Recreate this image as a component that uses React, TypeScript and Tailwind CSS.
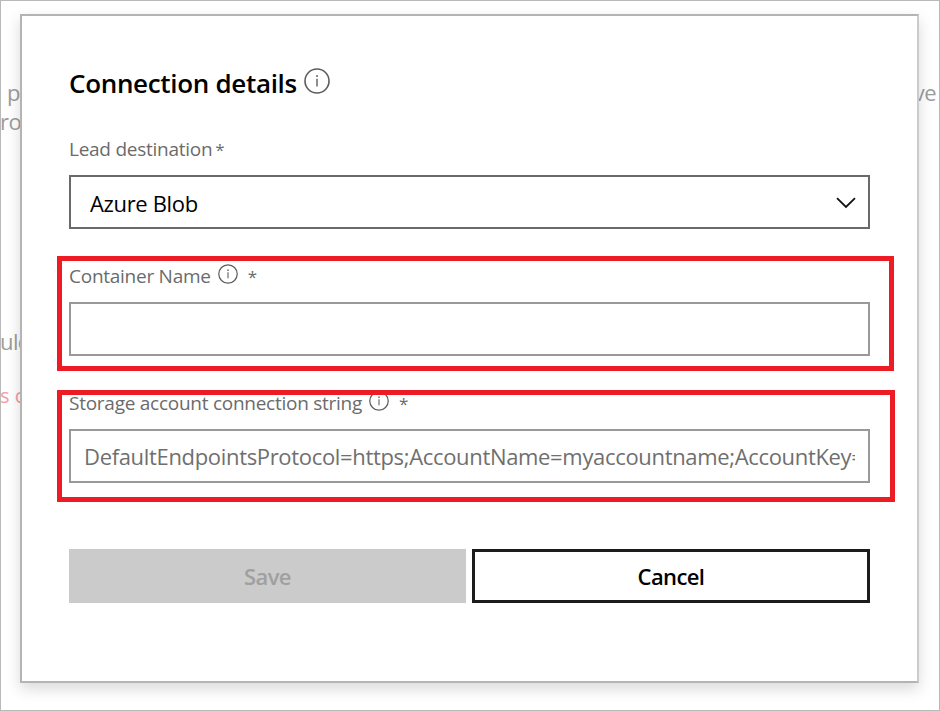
import type { ReactNode } from 'react'

function InfoIcon({ size, className = '' }: { size: number; className?: string }) {
  return (
    <svg width={size} height={size} viewBox="0 0 26 26" fill="none" className={`shrink-0 ${className}`}>
      <circle cx="13" cy="13" r="12" stroke="#5c5c5c" strokeWidth="1.6" />
      <path d="M13 10.8V18.6" stroke="#707070" strokeWidth="1.6" />
      <circle cx="13" cy="8" r="1.1" fill="#707070" />
    </svg>
  )
}

function Field({ label, info = false, children }: { label: string; info?: boolean; children: ReactNode }) {
  return (
    <section className="flex flex-col gap-[11px]">
      <div className="flex h-[30px] items-center gap-[7px] whitespace-nowrap pt-px text-[19px] tracking-[-0.26px] text-[#6b6b6b]">
        <span>
          {label}
          {!info && <span className="pl-[3px] text-[17px]">*</span>}
        </span>
        {info && <InfoIcon size={20} className="mb-[6px]" />}
        {info && <span className="pl-[3px] text-[17px]">*</span>}
      </div>
      {children}
    </section>
  )
}

function Highlight({ className }: { className: string }) {
  return <div className={`pointer-events-none absolute border-[5px] border-[#ed1c24] ${className}`} />
}

export default function App() {
  return (
    <div className="relative h-[711px] w-[940px] overflow-hidden border border-[#b9b9b9] bg-white px-[19px] pt-[13px] font-['Open_Sans','Noto_Sans',sans-serif]">
      <div className="absolute inset-0 flex justify-between pt-[76px] text-[22px] leading-[30px] tracking-[-0.6px] text-[#9c9c9c]">
        <div className="-ml-px flex flex-col whitespace-nowrap">
          <span className="pl-[7px]">p</span>
          <span className="-mt-px">ro</span>
          <span className="mt-[190px]">uld</span>
          <span className="mt-[25px] text-[20px] tracking-normal text-[#f59ba3]">s c</span>
        </div>
        <span className="pr-[3px]">ve</span>
      </div>
      <main className="relative flex h-[669px] w-[899px] flex-col border-2 border-[#b4b4b4] border-r-[#cbcbcb] bg-white px-[47px] pt-[49px] shadow-[0_6px_14px_rgba(0,0,0,0.15)]">
        <header className="flex h-[40px] items-center gap-[7px]">
          <h1 className="mb-1 whitespace-nowrap text-[26px] font-semibold tracking-[-0.32px] text-black">Connection details</h1>
          <InfoIcon size={26} className="mb-2" />
        </header>

        <div className="mt-[29px] flex flex-col gap-8">
          <Field label="Lead destination">
            <div className="flex h-[54px] w-[801px] items-center justify-between border-2 border-[#6a6a6a] pl-[19px] pr-[12px] pt-[2px] text-[22px] tracking-[-0.35px] text-black">
              <span className="whitespace-nowrap">Azure Blob</span>
              <svg width="20" height="12" viewBox="0 0 20 12" fill="none">
                <path d="M1 1.2L10 10L19 1.2" stroke="#111" strokeWidth="1.8" />
              </svg>
            </div>
          </Field>

          <Field label="Container Name" info>
            <div className="h-[54px] w-[801px] border-2 border-[#999]" />
          </Field>

          <Field label="Storage account connection string" info>
            <div className="flex h-[54px] w-[801px] items-center border-2 border-[#999] px-[13px] text-[22px] tracking-[-0.33px] text-[#6f6f6f]">
              <div className="w-full overflow-hidden whitespace-nowrap">
                DefaultEndpointsProtocol=https;AccountName=myaccountname;AccountKey=
              </div>
            </div>
          </Field>
        </div>

        <footer className="mt-[66px] flex gap-[6px] text-[22px] font-semibold tracking-[-0.6px]">
          <button className="h-[54px] w-[397px] bg-[#cbcbcb] text-[#a0a0a0]">Save</button>
          <button className="h-[54px] w-[398px] border-[3px] border-[#1c1c1c] bg-white text-black">Cancel</button>
        </footer>

        <Highlight className="left-[35px] top-[240px] h-[115px] w-[837px]" />
        <Highlight className="left-[35px] top-[374px] h-[112px] w-[838px]" />
      </main>
    </div>
  )
}
